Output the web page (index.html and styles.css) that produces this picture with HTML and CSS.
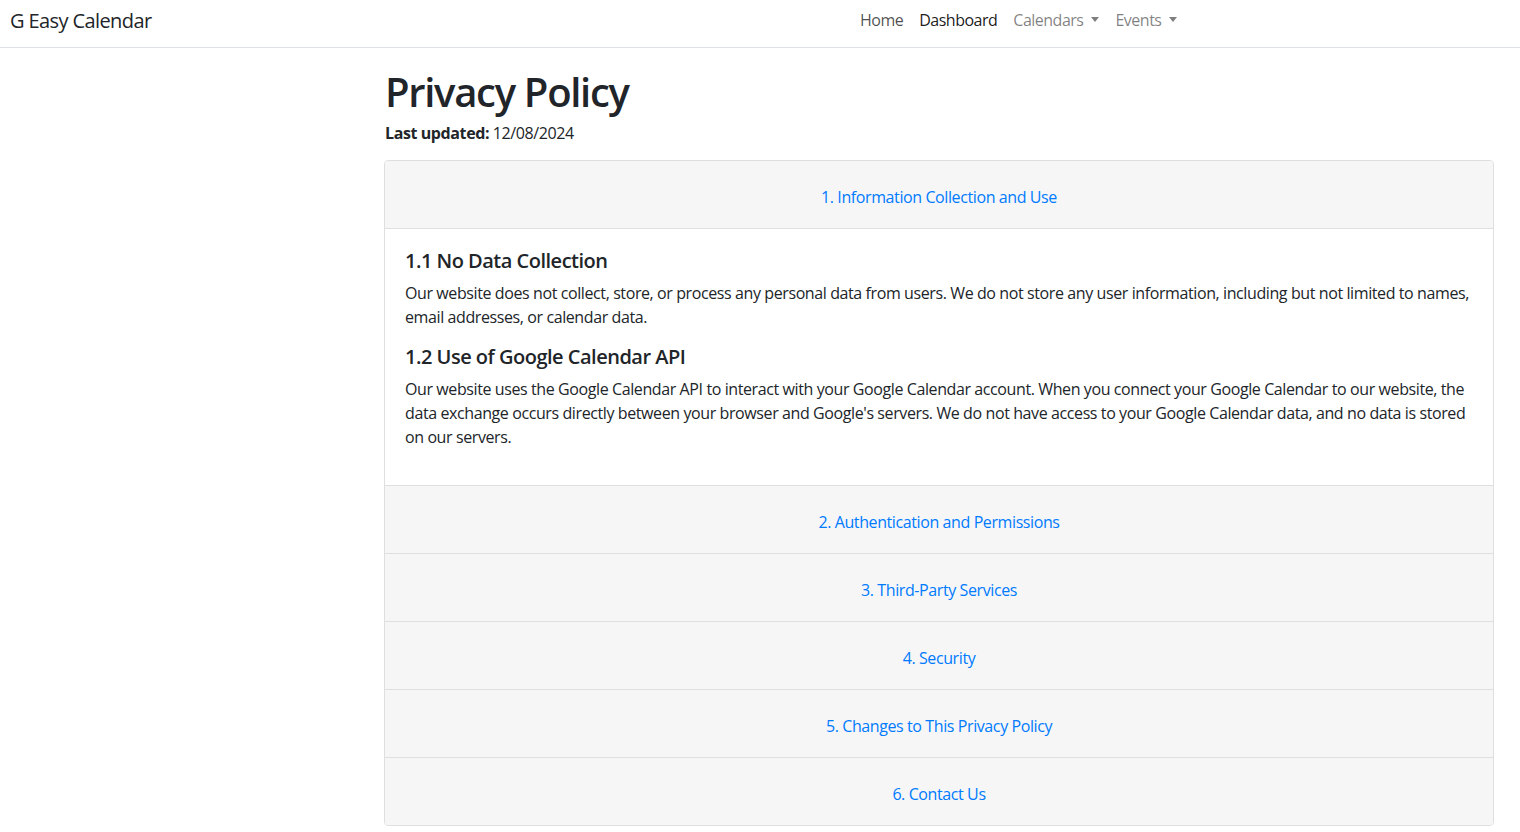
FILE: index.html
```html
<!DOCTYPE html>
<html lang="en">
<head>
<meta charset="utf-8">
<title>Privacy Policy - G Easy Calendar</title>
<link rel="stylesheet" href="styles.css">
</head>
<body>
<nav class="navbar">
  <a class="brand" href="#">G Easy Calendar</a>
  <ul class="nav">
    <li><a class="nav-link home" href="#">Home</a></li>
    <li><a class="nav-link active" href="#">Dashboard</a></li>
    <li><a class="nav-link dropdown" href="#">Calendars<span class="caret"></span></a></li>
    <li><a class="nav-link dropdown" href="#">Events<span class="caret"></span></a></li>
  </ul>
</nav>
<main class="content">
  <h1 class="title">Privacy Policy</h1>
  <p class="updated"><strong>Last updated:</strong> 12/08/2024</p>
  <div class="accordion">
    <section class="acc-item">
      <div class="acc-header"><button class="acc-btn">1. Information Collection and Use</button></div>
      <div class="acc-body">
        <h5 class="sub">1.1 No Data Collection</h5>
        <p class="para">Our website does not collect, store, or process any personal data from users. We do not store any user information, including but not limited to names, email addresses, or calendar data.</p>
        <h5 class="sub">1.2 Use of Google Calendar API</h5>
        <p class="para">Our website uses the Google Calendar API to interact with your Google Calendar account. When you connect your Google Calendar to our website, the data exchange occurs directly between your browser and Google's servers. We do not have access to your Google Calendar data, and no data is stored on our servers.</p>
      </div>
    </section>
    <section class="acc-item">
      <div class="acc-header"><button class="acc-btn">2. Authentication and Permissions</button></div>
    </section>
    <section class="acc-item">
      <div class="acc-header"><button class="acc-btn">3. Third-Party Services</button></div>
    </section>
    <section class="acc-item">
      <div class="acc-header"><button class="acc-btn">4. Security</button></div>
    </section>
    <section class="acc-item">
      <div class="acc-header"><button class="acc-btn">5. Changes to This Privacy Policy</button></div>
    </section>
    <section class="acc-item">
      <div class="acc-header"><button class="acc-btn">6. Contact Us</button></div>
    </section>
  </div>
</main>
</body>
</html>
```
FILE: styles.css
```css
* { box-sizing: border-box; }
html, body {
  margin: 0;
  padding: 0;
  background: #fff;
  color: #212529;
  font-family: "Open Sans", "Noto Sans", "Liberation Sans", sans-serif;
  font-size: 16px;
  line-height: 1.5;
  letter-spacing: -0.4px;
}
a { text-decoration: none; }

.navbar {
  display: grid;
  grid-template-columns: 842px auto;
  align-items: center;
  height: 48px;
  padding: 0 0 1px 10px;
  border-bottom: 1px solid #dee2e6;
}
.brand {
  font-size: 20px;
  line-height: 30px;
  color: #212529;
  margin-top: -4px;
  letter-spacing: -0.6px;
}
.nav {
  display: flex;
  list-style: none;
  margin: -6px 0 0 0;
  padding: 0;
}
.nav-link {
  display: flex;
  align-items: center;
  padding: 0 8px;
  line-height: 24px;
  font-size: 16px;
  letter-spacing: -0.5px;
  color: rgba(0,0,0,.5);
}
.nav-link.home { color: rgba(0,0,0,.7); }
.nav-link.active { color: rgba(0,0,0,.9); }
.caret {
  display: inline-block;
  margin-left: 8px;
  width: 0;
  height: 0;
  border-top: 5px solid currentColor;
  border-left: 4.5px solid transparent;
  border-right: 4.5px solid transparent;
  margin-top: -1px;
}

.content {
  margin-left: 384px;
  width: 1110px;
  padding-top: 20px;
}
.title {
  margin: 0 0 5px 1px;
  font-size: 40px;
  line-height: 48px;
  font-weight: 600;
  letter-spacing: -1.3px;
}
.updated {
  margin: 0 0 15px 1px;
  font-size: 16px;
}
.updated strong { font-weight: 700; }

.accordion {
  border: 1px solid #dfdfdf;
  border-radius: 4px;
  overflow: hidden;
}
.acc-item + .acc-item { border-top: 1px solid #dfdfdf; }
.acc-header {
  background: #f6f6f6;
  height: 67px;
  display: flex;
  justify-content: center;
  align-items: flex-start;
  padding-top: 24px;
}
.acc-item:first-child .acc-header { border-bottom: 1px solid #dfdfdf; height: 68px; }
.acc-btn {
  background: none;
  border: 0;
  padding: 0;
  font: inherit;
  letter-spacing: inherit;
  line-height: 24px;
  color: #007bff;
  cursor: pointer;
}
.acc-body {
  padding: 20px 20px 20px;
}
.sub {
  margin: 0 0 8px;
  font-size: 20px;
  line-height: 24px;
  font-weight: 600;
  letter-spacing: -0.5px;
}
.para {
  margin: 0 0 16px;
  line-height: 24px;
}
```
